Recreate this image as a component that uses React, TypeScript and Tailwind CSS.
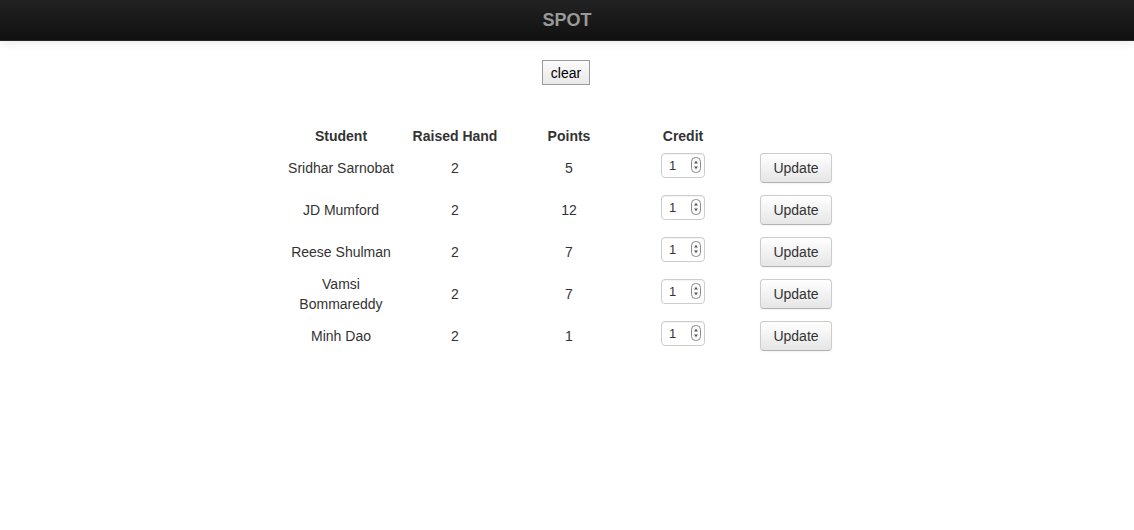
import React from "react";

const rows = [
  { name: "Sridhar Sarnobat", hand: 2, points: 5 },
  { name: "JD Mumford", hand: 2, points: 12 },
  { name: "Reese Shulman", hand: 2, points: 7 },
  { name: "Vamsi Bommareddy", hand: 2, points: 7 },
  { name: "Minh Dao", hand: 2, points: 1 },
];

function Spinner() {
  return (
    <svg width="10" height="16" viewBox="0 0 10 16" className="block">
      <rect x="0.5" y="0.5" width="9" height="15" rx="4" fill="#fafafa" stroke="#8a8a8a" />
      <path d="M5 3.8 L6.9 6.6 L3.1 6.6 Z" fill="#555" />
      <path d="M5 12.2 L6.9 9.4 L3.1 9.4 Z" fill="#555" />
    </svg>
  );
}

export default function App() {
  return (
    <div
      className="min-h-[530px] bg-white text-[14px] text-[#333]"
      style={{ fontFamily: '"Liberation Sans", Arial, sans-serif' }}
    >
      <div className="h-[41px] flex items-center justify-center bg-gradient-to-b from-[#222222] to-[#111111] border-b border-[#252525] shadow-[0_1px_10px_rgba(0,0,0,0.1)]">
        <span className="text-[18px] font-bold text-[#999999] leading-none">SPOT</span>
      </div>

      <div className="flex justify-center pt-[19px] pr-[2px]">
        <button className="w-[48px] h-[25px] border border-[#9a9a9a] bg-gradient-to-b from-[#fbfbfb] to-[#e9e9e9] text-[14px] text-black leading-none">
          clear
        </button>
      </div>

      <div className="flex justify-center pt-[41px] pl-[4px]">
        <div className="w-[570px]">
          <div className="grid grid-cols-[114px_114px_114px_114px_114px] h-[20px] items-center font-bold leading-[20px] text-center">
            <div>Student</div>
            <div>Raised Hand</div>
            <div>Points</div>
            <div>Credit</div>
            <div></div>
          </div>
          <div className="pt-[1px]">
            {rows.map((r) => (
              <div
                key={r.name}
                className="grid grid-cols-[114px_114px_114px_114px_114px] h-[42px] items-center text-center leading-[20px]"
              >
                <div>{r.name}</div>
                <div>{r.hand}</div>
                <div>{r.points}</div>
                <div className="flex justify-center">
                  <div className="w-[44px] h-[25px] mb-[6px] rounded-[4px] border border-[#cccccc] bg-white flex items-center justify-between pl-[7px] pr-[3px] shadow-[inset_0_1px_1px_rgba(0,0,0,0.05)]">
                    <span className="text-[13px] text-[#333] leading-none">1</span>
                    <Spinner />
                  </div>
                </div>
                <div className="flex justify-center pr-[2px]">
                  <button className="w-[72px] h-[30px] rounded-[4px] border border-[#cccccc] border-b-[#b3b3b3] bg-gradient-to-b from-[#ffffff] to-[#e6e6e6] text-[14px] text-[#333] shadow-[0_1px_2px_rgba(0,0,0,0.05)] leading-none">
                    Update
                  </button>
                </div>
              </div>
            ))}
          </div>
        </div>
      </div>
    </div>
  );
}
